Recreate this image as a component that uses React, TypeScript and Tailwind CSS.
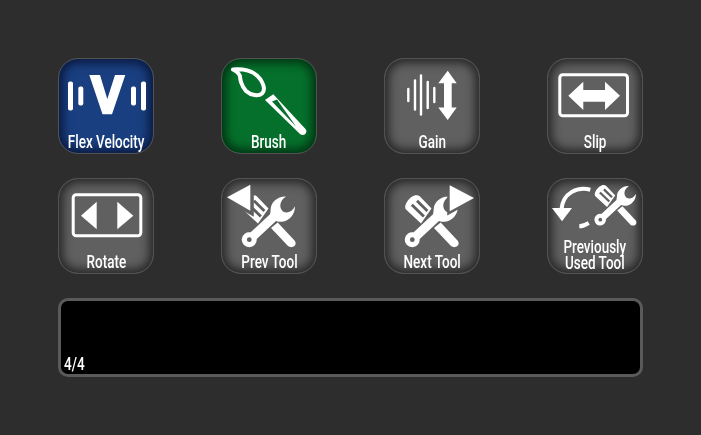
import React from 'react'

type Variant = 'blue' | 'green' | 'gray'

const variantMap: Record<Variant, string> = {
  blue: 'bg-[#1a3f80] shadow-[inset_0_0_10px_4px_rgba(5,15,45,0.8)]',
  green: 'bg-[#05702b] shadow-[inset_0_0_10px_4px_rgba(0,35,12,0.8)]',
  gray: 'bg-[#606060] shadow-[inset_0_0_10px_4px_rgba(25,25,25,0.8)]',
}

// wrench crossed with a slotted spatula, in button pixel coords
const Tools = ({ transform, mask }: { transform?: string; mask?: string }) => (
  <g fill="#fff" transform={transform} mask={mask}>
    <path
      fillRule="evenodd"
      d="M65 18.500C57 18 50 24 49.700 31C49.600 33 49.300 35 49 36.300L29.700 54.300A7.500 7.500 0 1 0 35.700 60.900L55 42.900C57 43.600 59 44 61 43.800C68 43 74 37 74 28.300C71 34 66 36 62 33.500C58 30 58 23 65 18.500ZM28.300 59.300a2.400 2.400 0 1 1 0 4.800a2.400 2.400 0 0 1 0-4.800Z"
    />
    <path d="M50 50L56.700 44.500L73.500 62.500C75 64.500 75 66.500 73.500 68C71.500 69.500 69 69.500 67 68Z" />
    <path
      fillRule="evenodd"
      d="M21.500 27C23 22.500 26.500 19 30 17.700C32 17 34.500 17.300 36 18.500L47.500 30.500L37 45.500L22 31.500C21 30 21 28.500 21.500 27ZM26.800 27.800L28.800 25.800L40.900 37.400L38.900 39.400ZM32 23.800L34 21.800L44.400 32L42.400 34Z"
    />
  </g>
)

const icons: Record<string, React.ReactNode> = {
  flex: (
    <g fill="#fff">
      <rect x="10" y="22.500" width="5" height="29" rx="2" />
      <rect x="20.300" y="27.500" width="5" height="19" rx="2" />
      <polygon points="31.300,16 42,16 49.300,40 57,16 67.300,16 54,55.300 44.500,55.300" />
      <rect x="73" y="27.500" width="5" height="19" rx="2" />
      <rect x="83" y="22.500" width="5" height="29" rx="2" />
    </g>
  ),
  brush: (
    <g>
      <path
        d="M12 10.500C19 10 32 9.500 39.500 20.500C43 26 44.500 31 41 34.500C37.500 37.500 30 36.500 25 32C20.500 27.500 19 20 19 17C18 14.500 15 12 12 10.500Z"
        fill="none"
        stroke="#fff"
        strokeWidth="4"
        strokeLinejoin="round"
      />
      <path
        fillRule="evenodd"
        fill="#fff"
        d="M44 41L52.300 35.300L84.500 70C85.800 71.700 85.700 73.600 84.300 75C82.800 76.300 80.800 76.300 79 75ZM51 42.500L75 67.500L56 40.500Z"
      />
    </g>
  ),
  gain: (
    <g>
      <g stroke="#fff" strokeWidth="2.400" strokeLinecap="round">
        <path d="M24.300 30v12M31 21.500v29M37 16.500v39M43.700 23v26M50.300 29v14" />
      </g>
      <polygon
        fill="#fff"
        points="63.700,11.700 72.700,24.300 67.700,24.300 67.700,48.500 72.700,48.500 63.700,61 54.300,48.500 60,48.500 60,24.300 54.300,24.300"
      />
    </g>
  ),
  slip: (
    <g>
      <rect x="12.800" y="15.800" width="67.700" height="41" rx="3" fill="none" stroke="#fff" strokeWidth="3" />
      <polygon
        fill="#fff"
        points="21.300,36.700 36.300,22.700 36.300,31 58,31 58,22.700 73,36.700 58,51 58,42.700 36.300,42.700 36.300,51"
      />
    </g>
  ),
  rotate: (
    <g>
      <rect x="15.200" y="15.800" width="67.600" height="41" rx="3" fill="none" stroke="#fff" strokeWidth="3" />
      <polygon fill="#fff" points="23,36.700 38.700,22.700 38.700,50.300" />
      <polygon fill="#fff" points="75.300,36.700 59.300,22.700 59.300,50.300" />
    </g>
  ),
  prev: (
    <g transform="translate(0 -1)">
      <mask id="prev-cut" maskUnits="userSpaceOnUse" x="0" y="0" width="96" height="96">
        <rect width="96" height="96" fill="#fff" />
        <polygon points="6,19.300 29.300,6.700 29.300,32.700" fill="#000" stroke="#000" strokeWidth="7" />
      </mask>
      <Tools mask="url(#prev-cut)" />
      <polygon fill="#fff" points="6,19.300 29.300,6.700 29.300,32.700" />
    </g>
  ),
  next: (
    <g transform="translate(0 -1)">
      <mask id="next-cut" maskUnits="userSpaceOnUse" x="0" y="0" width="96" height="96">
        <rect width="96" height="96" fill="#fff" />
        <polygon points="65.700,7.300 90,20 65.700,33.300" fill="#000" stroke="#000" strokeWidth="5" />
      </mask>
      <Tools mask="url(#next-cut)" />
      <polygon fill="#fff" points="65.700,7.300 90,20 65.700,33.300" />
    </g>
  ),
  recent: (
    <g transform="translate(0 -1)">
      <Tools transform="translate(31.200 -6.400) scale(0.78)" />
      <path d="M43.300 11.700C30 8.500 16 15 14.500 31" fill="none" stroke="#fff" strokeWidth="4" />
      <polygon fill="#fff" points="5,30 25,30 15,43.300" />
      <path d="M32.300 48.300C35.500 48.300 38.500 47 41.700 45" fill="none" stroke="#fff" strokeWidth="4" />
    </g>
  ),
}

const buttons: { label: string[]; icon: string; variant: Variant }[] = [
  { label: ['Flex Velocity'], icon: 'flex', variant: 'blue' },
  { label: ['Brush'], icon: 'brush', variant: 'green' },
  { label: ['Gain'], icon: 'gain', variant: 'gray' },
  { label: ['Slip'], icon: 'slip', variant: 'gray' },
  { label: ['Rotate'], icon: 'rotate', variant: 'gray' },
  { label: ['Prev Tool'], icon: 'prev', variant: 'gray' },
  { label: ['Next Tool'], icon: 'next', variant: 'gray' },
  { label: ['Previously', 'Used Tool'], icon: 'recent', variant: 'gray' },
]

const PadButton = ({ label, icon, variant }: { label: string[]; icon: string; variant: Variant }) => {
  const twoLines = label.length > 1
  return (
    <button
      type="button"
      className={`flex h-[96px] w-[96px] flex-col items-center overflow-hidden rounded-[20px] border border-[#525252] ${variantMap[variant]}`}
    >
      <svg
        viewBox={twoLines ? '1 0 94 60' : '1 0 94 73'}
        className={`w-[94px] shrink-0 overflow-visible ${twoLines ? 'h-[60px]' : 'h-[73px]'}`}
      >
        {icons[icon]}
      </svg>
      <div
        className={`flex scale-x-[0.75] flex-col items-center whitespace-nowrap font-['Roboto',sans-serif] text-[18px] font-medium text-white ${
          twoLines ? 'leading-[16px]' : 'leading-[20px]'
        }`}
      >
        {label.map((line) => (
          <span key={line}>{line}</span>
        ))}
      </div>
    </button>
  )
}

export default function App() {
  return (
    <div className="flex h-[435px] w-[701px] flex-col bg-[#2d2d2d] pl-[58px] pt-[58px]">
      <div className="grid w-[585px] grid-cols-[repeat(4,96px)] gap-x-[67px] gap-y-[24px]">
        {buttons.map((b) => (
          <PadButton key={b.icon} {...b} />
        ))}
      </div>
      <div className="mt-[24px] flex h-[79px] w-[585px] items-end rounded-[10px] border-[3px] border-[#5a5a5a] bg-black pl-[3px]">
        <span className="origin-left scale-x-[0.75] font-['Roboto',sans-serif] text-[18px] font-medium leading-[20px] text-white">
          4/4
        </span>
      </div>
    </div>
  )
}
